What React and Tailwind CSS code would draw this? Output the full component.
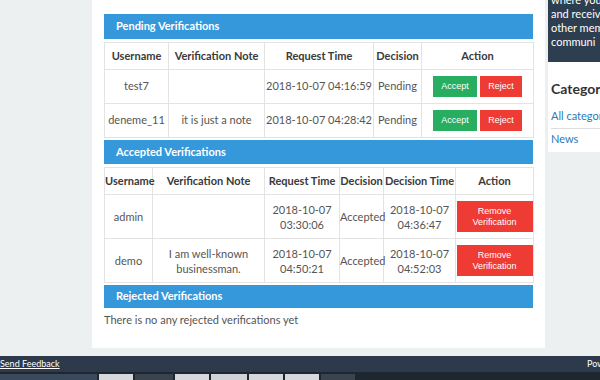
import React from "react";

const font = { fontFamily: 'Lato, "Open Sans", sans-serif' };

const SectionHeader = ({ children, className = "" }) => (
  <div className={`bg-[#3498db] text-white font-bold text-[11px] pl-[12px] flex items-center ${className}`}>
    {children}
  </div>
);

const Btn = ({ color, children, className = "" }) => (
  <span
    className={`${color} text-white text-[9px] leading-[11px] flex items-center justify-center text-center ${className}`}
    style={{ fontFamily: '"Liberation Sans", Arial, sans-serif' }}
  >
    {children}
  </span>
);

const pending = [
  { user: "test7", note: "", time: "2018-10-07 04:16:59" },
  { user: "deneme_11", note: "it is just a note", time: "2018-10-07 04:28:42" },
];

const accepted = [
  { user: "admin", note: "", req: ["2018-10-07", "03:30:06"], dec: ["2018-10-07", "04:36:47"] },
  { user: "demo", note: ["I am well-known", "businessman."], req: ["2018-10-07", "04:50:21"], dec: ["2018-10-07", "04:52:03"] },
];

const td = "border border-[#e3e3e3] text-center p-0";

export default function App() {
  return (
    <div className="w-[600px] h-[380px] bg-[#ecf0f1] overflow-hidden flex flex-col text-[#555]" style={font}>
      <div className="flex h-[348px] pl-[92px]">
        {/* main card */}
        <div className="w-[453px] bg-white px-[12px] flex flex-col">
          <div className="h-[14px] overflow-hidden">
            <div className="-mt-[13px] pl-[66px] text-[11px] leading-[14px] text-[#555] whitespace-nowrap">
              your profile, pending requests, categories
            </div>
          </div>

          <SectionHeader className="h-[25px]">Pending Verifications</SectionHeader>
          <table className="mt-[3px] w-[429px] border-collapse text-[11px] table-fixed">
            <colgroup>
              <col className="w-[64px]" />
              <col className="w-[96px]" />
              <col className="w-[109px]" />
              <col className="w-[48px]" />
              <col className="w-[112px]" />
            </colgroup>
            <thead>
              <tr className="h-[27px] font-bold text-[#3a3a3a]">
                <th className={td}>Username</th>
                <th className={td}>Verification Note</th>
                <th className={td}>Request Time</th>
                <th className={td}>Decision</th>
                <th className={td}>Action</th>
              </tr>
            </thead>
            <tbody>
              {pending.map((r) => (
                <tr key={r.user} className="h-[34px]">
                  <td className={td}>{r.user}</td>
                  <td className={td}>{r.note}</td>
                  <td className={td}>{r.time}</td>
                  <td className={td}>Pending</td>
                  <td className={td}>
                    <div className="flex justify-center gap-[3px]">
                      <Btn color="bg-[#27ae60]" className="w-[44px] h-[21px]">Accept</Btn>
                      <Btn color="bg-[#ee3b34]" className="w-[42px] h-[21px]">Reject</Btn>
                    </div>
                  </td>
                </tr>
              ))}
            </tbody>
          </table>

          <SectionHeader className="h-[24px] mt-[2px]">Accepted Verifications</SectionHeader>
          <table className="mt-[3px] w-[429px] border-collapse text-[11px] table-fixed">
            <colgroup>
              <col className="w-[48px]" />
              <col className="w-[112px]" />
              <col className="w-[75px]" />
              <col className="w-[44px]" />
              <col className="w-[72px]" />
              <col className="w-[78px]" />
            </colgroup>
            <thead>
              <tr className="h-[27px] font-bold text-[#3a3a3a]">
                <th className={`${td} whitespace-nowrap`}>Username</th>
                <th className={td}>Verification Note</th>
                <th className={`${td} whitespace-nowrap`}>Request Time</th>
                <th className={td}>Decision</th>
                <th className={`${td} whitespace-nowrap`}>Decision Time</th>
                <th className={td}>Action</th>
              </tr>
            </thead>
            <tbody>
              {accepted.map((r) => (
                <tr key={r.user} className="h-[44px] leading-[15px]">
                  <td className={td}>{r.user}</td>
                  <td className={td}>
                    {Array.isArray(r.note) ? (
                      <>
                        {r.note[0]}
                        <br />
                        {r.note[1]}
                      </>
                    ) : (
                      r.note
                    )}
                  </td>
                  <td className={td}>
                    {r.req[0]}
                    <br />
                    {r.req[1]}
                  </td>
                  <td className={`${td} whitespace-nowrap`}>Accepted</td>
                  <td className={td}>
                    {r.dec[0]}
                    <br />
                    {r.dec[1]}
                  </td>
                  <td className={td}>
                    <Btn color="bg-[#ee3b34]" className="w-[76px] h-[31px] mx-auto">
                      Remove
                      <br />
                      Verification
                    </Btn>
                  </td>
                </tr>
              ))}
            </tbody>
          </table>

          <SectionHeader className="h-[23px] mt-[2px]">Rejected Verifications</SectionHeader>
          <p className="text-[11px] text-[#555] mt-[4px]">There is no any rejected verifications yet</p>
        </div>

        {/* sidebar */}
        <div className="ml-[3px] w-[52px] flex flex-col overflow-hidden">
          <div className="bg-[#2c3e50] h-[62px] pl-[3px] text-[11px] leading-[14px] text-white whitespace-nowrap">
            <div className="-mt-[7px]">where you</div>
            <div>and receive</div>
            <div>other mem</div>
            <div>communi</div>
          </div>
          <div className="bg-white h-[90px] pl-[3px] whitespace-nowrap">
            <div className="mt-[16px] text-[14px] font-bold text-[#333]">Categories</div>
            <div className="mt-[9px] text-[11px] text-[#2a7ab8] pb-[3px] border-b border-[#ddd]">All categories</div>
            <div className="mt-[2px] text-[11px] text-[#2a7ab8]">News</div>
          </div>
        </div>
      </div>

      <div className="h-[8px]" />
      <div className="h-[16px] bg-[#2c3a4b] flex items-center justify-between text-white text-[9px]">
        <span className="underline">Send Feedback</span>
        <span className="w-[13px] overflow-hidden whitespace-nowrap">Powered</span>
      </div>
      <div className="flex-1 bg-[#1e2630] flex items-end gap-[2px] pt-[2px]">
        <div className="w-[97px] h-full bg-[#3a4a5c]" />
        <div className="w-[34px] h-full bg-[#d5d8dc]" />
        <div className="w-[38px] h-full bg-[#3a4350]" />
        <div className="w-[34px] h-full bg-[#d5d8dc]" />
        <div className="w-[36px] h-full bg-[#cfd3d7]" />
        <div className="w-[34px] h-full bg-[#d5d8dc]" />
        <div className="w-[34px] h-full bg-[#d5d8dc]" />
        <div className="w-[34px] h-full bg-[#3a4350]" />
      </div>
    </div>
  );
}
